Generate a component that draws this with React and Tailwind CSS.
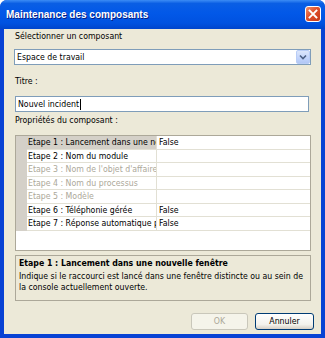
import React from "react";

const rows = [
  { name: "Etape 1 : Lancement dans une nouvelle fenêtre", value: "False", selected: true },
  { name: "Etape 2 : Nom du module", value: "" },
  { name: "Etape 3 : Nom de l'objet d'affaire", value: "", disabled: true },
  { name: "Etape 4 : Nom du processus", value: "", disabled: true },
  { name: "Etape 5 : Modèle", value: "", disabled: true },
  { name: "Etape 6 : Téléphonie gérée", value: "False" },
  { name: "Etape 7 : Réponse automatique par défaut", value: "False" },
];

function App() {
  return (
    <div
      className="w-[325px] h-[338px] flex flex-col rounded-t-[7px] bg-[#0842D4] overflow-hidden text-[8.7px] text-black"
      style={{ fontFamily: '"DejaVu Sans Condensed", "DejaVu Sans", sans-serif' }}
    >
      {/* barre de titre */}
      <div className="h-[29px] shrink-0 flex items-center justify-between pl-[6px] pr-[4px] bg-[linear-gradient(180deg,#3C8CF5_0%,#0A5EE4_12%,#0258E8_45%,#0052E0_80%,#0045CC_100%)]">
        <span
          className="text-white font-bold text-[10px] [text-shadow:1px_1px_0_#0A1E80]"
          style={{ fontFamily: '"Liberation Sans", Arial, sans-serif' }}
        >
          Maintenance des composants
        </span>
        <div className="w-[16px] h-[16px] mt-[-2px] rounded-[3px] border border-white bg-[linear-gradient(135deg,#F0906C_0%,#E0502C_45%,#C43818_100%)] flex items-center justify-center">
          <svg width="10" height="10" viewBox="0 0 10 10">
            <path d="M1.5 1.5 L8.5 8.5 M8.5 1.5 L1.5 8.5" stroke="white" strokeWidth="1.8" strokeLinecap="square" />
          </svg>
        </div>
      </div>

      {/* contenu */}
      <div className="flex-1 mx-[4px] mb-[4px] bg-[#ECE9D8] flex flex-col px-[10px] pt-[1px]">
        <div className="h-[13px] leading-[13px] ml-[1px]">Sélectionner un composant</div>

        <div className="mt-[6px] h-[16px] border border-[#7F9DB9] bg-white flex items-center">
          <span className="flex-1 pl-[2px] leading-[14px]">Espace de travail</span>
          <div className="w-[14px] h-[14px] rounded-[2px] bg-[linear-gradient(180deg,#DCE6FB_0%,#C1D3FB_60%,#B2C7F5_100%)] border border-[#B9CDF6] flex items-center justify-center">
            <svg width="8" height="6" viewBox="0 0 8 6">
              <path d="M1 1.5 L4 4.5 L7 1.5" stroke="#4D6185" strokeWidth="1.6" fill="none" />
            </svg>
          </div>
        </div>

        <div className="mt-[10px] h-[13px] leading-[13px] ml-[1px]">Titre :</div>

        <div className="mt-[8px] h-[16px] mr-[2px] ml-[1px] border border-[#7F9DB9] bg-white flex items-center pl-[2px] leading-[14px]">
          Nouvel incident
          <span className="w-[1px] h-[11px] bg-black ml-[1px]" />
        </div>

        <div className="mt-[2px] h-[13px] leading-[13px] ml-[1px]">Propriétés du composant :</div>

        {/* grille des propriétés */}
        <div className="mt-[8px] h-[116px] ml-[1px] border border-[#ACA899] bg-white flex flex-col">
          {rows.map((r) => (
            <div key={r.name} className="h-[13.5px] flex shrink-0">
              <div className="w-[11px] bg-[#D4D0C8] shrink-0" />
              <div
                className={`w-[130px] shrink-0 pl-[1px] whitespace-nowrap overflow-hidden leading-[13px] border-b border-r border-[#E2E0D4] ${
                  r.selected ? "bg-[#D4D0C8]" : "bg-white"
                } ${r.disabled ? "text-[#ACA899]" : "text-black"}`}
              >
                {r.name}
              </div>
              <div className="flex-1 pl-[2px] leading-[13px] border-b border-[#E2E0D4] bg-white">
                {r.value}
              </div>
            </div>
          ))}
        </div>

        {/* description */}
        <div className="mt-[4px] h-[46px] ml-[1px] border border-[#ACA899] bg-[#ECE9D8] px-[3px] pt-[1px] flex flex-col">
          <div className="font-bold leading-[13px] h-[14px]">Etape 1 : Lancement dans une nouvelle fenêtre</div>
          <div className="leading-[11px]">
            Indique si le raccourci est lancé dans une fenêtre distincte ou au sein de la console actuellement ouverte.
          </div>
        </div>

        {/* boutons */}
        <div className="mt-[12px] mr-[-3px] flex justify-end gap-[7px]">
          <button className="w-[57px] h-[17px] rounded-[3px] border border-[#C9C7BA] bg-[#F5F4EA] text-[#ACA899] text-[8.7px] leading-none">
            OK
          </button>
          <button className="w-[59px] h-[17px] rounded-[3px] border border-[#003C74] bg-[linear-gradient(180deg,#FFFFFF_0%,#F3F2EC_70%,#D6D0C5_100%)] text-black text-[8.7px] leading-none">
            Annuler
          </button>
        </div>
      </div>
    </div>
  );
}

export default App;
